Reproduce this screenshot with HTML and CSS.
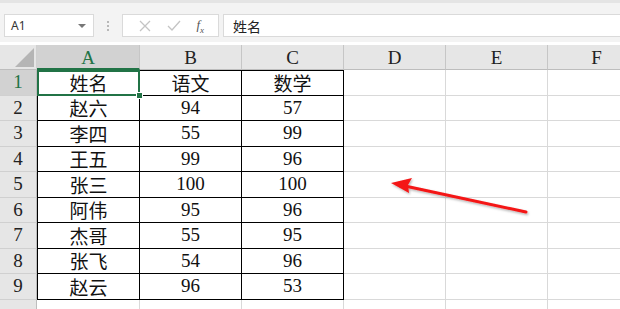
FILE: index.html
```html
<!DOCTYPE html>
<html lang="zh-CN">
<head>
  <meta charset="UTF-8">
  <title>Sheet</title>
  <link rel="stylesheet" href="styles.css">
</head>
<body>
  <div class="toolbar">
    <div class="namebox">
      <span>A1</span>
      <span class="caret"></span>
    </div>
    <div class="dots">
      <span></span><span></span><span></span>
    </div>
    <div class="fbuttons">
      <svg width="12" height="12" viewBox="0 0 12 12"><path d="M1 1 L11 11 M11 1 L1 11" stroke="#c4c4c4" stroke-width="1.3" fill="none"/></svg>
      <svg width="14" height="12" viewBox="0 0 14 12"><path d="M1 6 L5 10 L13 1" stroke="#c4c4c4" stroke-width="1.3" fill="none"/></svg>
      <span class="fx">f<sub>x</sub></span>
    </div>
    <div class="formula">姓名</div>
  </div>

  <div class="sheet">
    <div class="corner"><span class="tri"></span></div>
    <div class="colhead selected">A</div>
    <div class="colhead">B</div>
    <div class="colhead">C</div>
    <div class="colhead">D</div>
    <div class="colhead">E</div>
    <div class="colhead">F</div>

    <div class="rowhead selected">1</div>
    <div class="cell t a top active">姓名</div>
    <div class="cell t top">语文</div>
    <div class="cell t top">数学</div>
    <div class="cell"></div><div class="cell"></div><div class="cell"></div>

    <div class="rowhead">2</div>
    <div class="cell t a">赵六</div><div class="cell t">94</div><div class="cell t">57</div>
    <div class="cell"></div><div class="cell"></div><div class="cell"></div>

    <div class="rowhead">3</div>
    <div class="cell t a">李四</div><div class="cell t">55</div><div class="cell t">99</div>
    <div class="cell"></div><div class="cell"></div><div class="cell"></div>

    <div class="rowhead">4</div>
    <div class="cell t a">王五</div><div class="cell t">99</div><div class="cell t">96</div>
    <div class="cell"></div><div class="cell"></div><div class="cell"></div>

    <div class="rowhead">5</div>
    <div class="cell t a">张三</div><div class="cell t">100</div><div class="cell t">100</div>
    <div class="cell"></div><div class="cell"></div><div class="cell"></div>

    <div class="rowhead">6</div>
    <div class="cell t a">阿伟</div><div class="cell t">95</div><div class="cell t">96</div>
    <div class="cell"></div><div class="cell"></div><div class="cell"></div>

    <div class="rowhead">7</div>
    <div class="cell t a">杰哥</div><div class="cell t">55</div><div class="cell t">95</div>
    <div class="cell"></div><div class="cell"></div><div class="cell"></div>

    <div class="rowhead">8</div>
    <div class="cell t a">张飞</div><div class="cell t">54</div><div class="cell t">96</div>
    <div class="cell"></div><div class="cell"></div><div class="cell"></div>

    <div class="rowhead">9</div>
    <div class="cell t a">赵云</div><div class="cell t">96</div><div class="cell t">53</div>
    <div class="cell"></div><div class="cell"></div><div class="cell"></div>

    <div class="rowhead last"></div>
    <div class="cell"></div><div class="cell"></div><div class="cell"></div>
    <div class="cell"></div><div class="cell"></div><div class="cell"></div>

    <!-- annotation arrow drawn over the grid -->
    <svg class="arrow" width="620" height="264" viewBox="0 0 620 264">
      <defs>
        <filter id="sh" x="-10%" y="-50%" width="120%" height="200%">
          <feDropShadow dx="1" dy="1.5" stdDeviation="1" flood-color="#000" flood-opacity="0.3"/>
        </filter>
      </defs>
      <g filter="url(#sh)">
        <path d="M526 167 L405 141" stroke="#f41515" stroke-width="3" stroke-linecap="round" fill="none"/>
        <path d="M391 138 L412 133 L408 140 L409 148 Z" fill="#f41515"/>
      </g>
    </svg>
  </div>
</body>
</html>
```

FILE: styles.css
```css
body {
  margin: 0;
  width: 620px;
  height: 309px;
  overflow: hidden;
  background: #ffffff;
  font-family: "Liberation Serif", "Noto Sans CJK SC", serif;
}

/* formula bar */
.toolbar {
  height: 42px;
  box-sizing: border-box;
  padding: 11px 0 0 4px;
  display: flex;
  background: #f3f3f3;
  border-top: 3px solid #e4e4e4;
  border-bottom: 3px solid #f3f3f3;
  font-family: "Noto Sans", "Noto Sans CJK SC", sans-serif;
}

.namebox {
  width: 90px;
  height: 23px;
  box-sizing: border-box;
  background: #fff;
  border: 1px solid #dadada;
  display: flex;
  align-items: center;
  justify-content: space-between;
  padding: 0 7px 0 6px;
  font-size: 12px;
  color: #333;
}

.caret {
  width: 0;
  height: 0;
  border-left: 4px solid transparent;
  border-right: 4px solid transparent;
  border-top: 4px solid #777;
}

.dots {
  width: 28px;
  display: flex;
  flex-direction: column;
  align-items: center;
  justify-content: center;
  gap: 2px;
  height: 23px;
}

.dots span {
  width: 2px;
  height: 2px;
  background: #b8b8b8;
}

.fbuttons {
  width: 97px;
  height: 23px;
  box-sizing: border-box;
  background: #fff;
  border: 1px solid #dadada;
  display: flex;
  align-items: center;
  justify-content: space-around;
  padding: 0 6px 0 8px;
}

.fx {
  font-family: "Liberation Serif", serif;
  font-style: italic;
  font-size: 13px;
  color: #555;
}

.fx sub {
  font-size: 9px;
}

.formula {
  flex: 1;
  height: 23px;
  box-sizing: border-box;
  margin-left: 4px;
  background: #fff;
  border: 1px solid #dadada;
  border-right: none;
  padding: 1px 0 0 9px;
  font-size: 14px;
  color: #222;
}

/* grid */
.sheet {
  position: relative;
  display: grid;
  grid-template-columns: 37px 103px 102px 102px 102px 102px 98px;
  grid-template-rows: 25px repeat(9, 25.5px) 20px;
  margin-top: 3px;
  font-size: 19px;
  color: #111;
}

.corner {
  background: #e6e6e6;
  border-right: 1px solid #d0d0d0;
  border-bottom: 1px solid #bdbdbd;
  position: relative;
}

.tri {
  position: absolute;
  right: 2px;
  bottom: 2px;
  width: 0;
  height: 0;
  border-left: 19px solid transparent;
  border-bottom: 19px solid #b5b5b5;
}

.colhead {
  background: #e6e6e6;
  border-right: 1px solid #c6c6c6;
  border-bottom: 1px solid #bdbdbd;
  display: flex;
  align-items: center;
  justify-content: center;
  color: #222;
  padding-top: 2px;
  box-sizing: border-box;
}

.rowhead {
  background: #e6e6e6;
  border-bottom: 1px solid #d0d0d0;
  border-right: 1px solid #bdbdbd;
  display: flex;
  align-items: center;
  justify-content: center;
  color: #222;
}

.colhead.selected {
  background: #d2d2d2;
  color: #217346;
  border-bottom: 2px solid #217346;
}

.rowhead.selected {
  background: #d2d2d2;
  color: #217346;
}

.cell {
  border-right: 1px solid #d9d9d9;
  border-bottom: 1px solid #d9d9d9;
  display: flex;
  align-items: center;
  justify-content: center;
  box-sizing: border-box;
}

.cell.t {
  border-right-color: #000;
  border-bottom-color: #000;
}

.cell.a {
  border-left: 1px solid #000;
}

.cell.top {
  border-top: 1px solid #000;
}

.cell.active {
  position: relative;
}

.cell.active::after {
  content: '';
  position: absolute;
  left: -1px;
  top: -1px;
  right: -1px;
  bottom: -1px;
  border: 2px solid #217346;
}

.cell.active::before {
  content: '';
  position: absolute;
  right: -4px;
  bottom: -4px;
  width: 5px;
  height: 5px;
  background: #217346;
  border: 1px solid #fff;
  z-index: 1;
}

.arrow {
  position: absolute;
  left: 0;
  top: 0;
  pointer-events: none;
}
```
